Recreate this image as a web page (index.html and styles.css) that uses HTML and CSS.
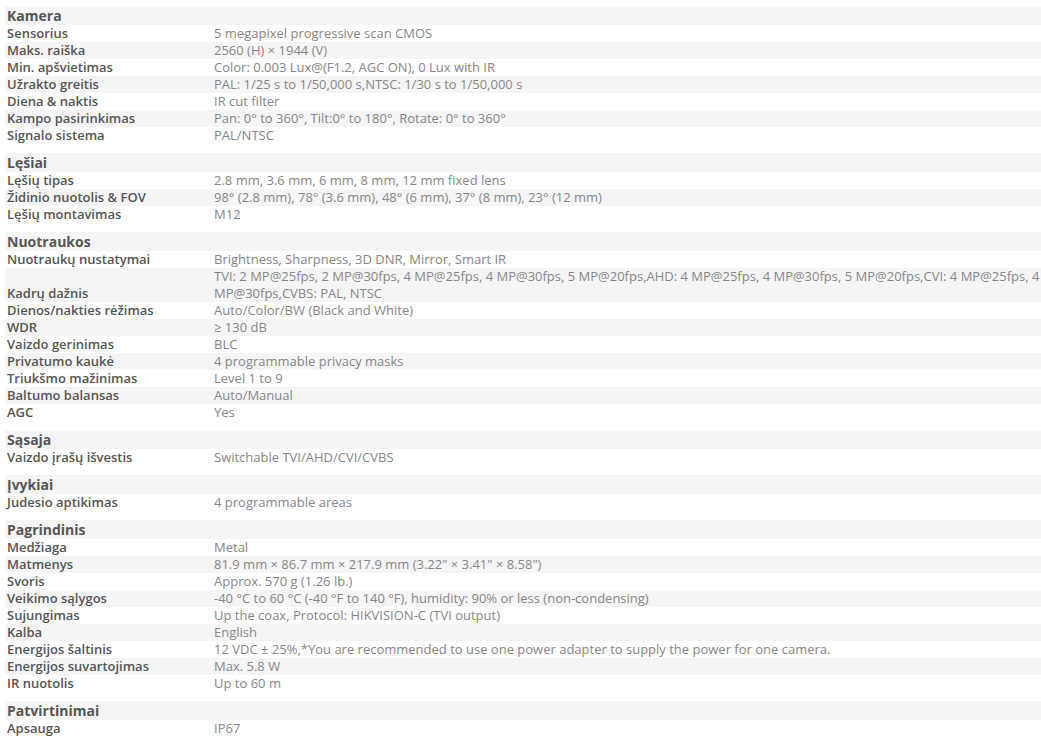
FILE: index.html
```html
<!DOCTYPE html>
<html lang="lt">
  <head>
    <meta charset="UTF-8" />
    <meta name="viewport" content="width=device-width, initial-scale=1.0" />
    <title>Specifikacijos</title>
    <link rel="stylesheet" href="styles.css">
  </head>
  <body>
    <div class="specs">
      <table class="spec-table">
        <tr class="spec-head"><th colspan="2">Kamera</th></tr>
        <tr><td class="spec-label">Sensorius</td><td class="spec-value">5 megapixel progressive scan CMOS</td></tr>
        <tr><td class="spec-label">Maks. raiška</td><td class="spec-value">2560 (H) × 1944 (V)</td></tr>
        <tr><td class="spec-label">Min. apšvietimas</td><td class="spec-value">Color: 0.003 Lux@(F1.2, AGC ON), 0 Lux with IR</td></tr>
        <tr><td class="spec-label">Užrakto greitis</td><td class="spec-value">PAL: 1/25 s to 1/50,000 s,NTSC: 1/30 s to 1/50,000 s</td></tr>
        <tr><td class="spec-label">Diena &amp; naktis</td><td class="spec-value">IR cut filter</td></tr>
        <tr><td class="spec-label">Kampo pasirinkimas</td><td class="spec-value">Pan: 0° to 360°, Tilt:0° to 180°, Rotate: 0° to 360°</td></tr>
        <tr><td class="spec-label">Signalo sistema</td><td class="spec-value">PAL/NTSC</td></tr>
      </table>

      <table class="spec-table">
        <tr class="spec-head"><th colspan="2">Lęšiai</th></tr>
        <tr><td class="spec-label">Lęšių tipas</td><td class="spec-value">2.8 mm, 3.6 mm, 6 mm, 8 mm, 12 mm fixed lens</td></tr>
        <tr><td class="spec-label">Židinio nuotolis &amp; FOV</td><td class="spec-value">98° (2.8 mm), 78° (3.6 mm), 48° (6 mm), 37° (8 mm), 23° (12 mm)</td></tr>
        <tr><td class="spec-label">Lęšių montavimas</td><td class="spec-value">M12</td></tr>
      </table>

      <table class="spec-table">
        <tr class="spec-head"><th colspan="2">Nuotraukos</th></tr>
        <tr><td class="spec-label">Nuotraukų nustatymai</td><td class="spec-value">Brightness, Sharpness, 3D DNR, Mirror, Smart IR</td></tr>
        <tr><td class="spec-label">Kadrų dažnis</td><td class="spec-value">TVI: 2 MP@25fps, 2 MP@30fps, 4 MP@25fps, 4 MP@30fps, 5 MP@20fps,AHD: 4 MP@25fps, 4 MP@30fps, 5 MP@20fps,CVI: 4 MP@25fps, 4 MP@30fps,CVBS: PAL, NTSC</td></tr>
        <tr><td class="spec-label">Dienos/nakties rėžimas</td><td class="spec-value">Auto/Color/BW (Black and White)</td></tr>
        <tr><td class="spec-label">WDR</td><td class="spec-value">≥ 130 dB</td></tr>
        <tr><td class="spec-label">Vaizdo gerinimas</td><td class="spec-value">BLC</td></tr>
        <tr><td class="spec-label">Privatumo kaukė</td><td class="spec-value">4 programmable privacy masks</td></tr>
        <tr><td class="spec-label">Triukšmo mažinimas</td><td class="spec-value">Level 1 to 9</td></tr>
        <tr><td class="spec-label">Baltumo balansas</td><td class="spec-value">Auto/Manual</td></tr>
        <tr><td class="spec-label">AGC</td><td class="spec-value">Yes</td></tr>
      </table>

      <table class="spec-table">
        <tr class="spec-head"><th colspan="2">Sąsaja</th></tr>
        <tr><td class="spec-label">Vaizdo įrašų išvestis</td><td class="spec-value">Switchable TVI/AHD/CVI/CVBS</td></tr>
      </table>

      <table class="spec-table">
        <tr class="spec-head"><th colspan="2">Įvykiai</th></tr>
        <tr><td class="spec-label">Judesio aptikimas</td><td class="spec-value">4 programmable areas</td></tr>
      </table>

      <table class="spec-table">
        <tr class="spec-head"><th colspan="2">Pagrindinis</th></tr>
        <tr><td class="spec-label">Medžiaga</td><td class="spec-value">Metal</td></tr>
        <tr><td class="spec-label">Matmenys</td><td class="spec-value">81.9 mm × 86.7 mm × 217.9 mm (3.22" × 3.41" × 8.58")</td></tr>
        <tr><td class="spec-label">Svoris</td><td class="spec-value">Approx. 570 g (1.26 lb.)</td></tr>
        <tr><td class="spec-label">Veikimo sąlygos</td><td class="spec-value">-40 °C to 60 °C (-40 °F to 140 °F), humidity: 90% or less (non-condensing)</td></tr>
        <tr><td class="spec-label">Sujungimas</td><td class="spec-value">Up the coax, Protocol: HIKVISION-C (TVI output)</td></tr>
        <tr><td class="spec-label">Kalba</td><td class="spec-value">English</td></tr>
        <tr><td class="spec-label">Energijos šaltinis</td><td class="spec-value">12 VDC ± 25%,*You are recommended to use one power adapter to supply the power for one camera.</td></tr>
        <tr><td class="spec-label">Energijos suvartojimas</td><td class="spec-value">Max. 5.8 W</td></tr>
        <tr><td class="spec-label">IR nuotolis</td><td class="spec-value">Up to 60 m</td></tr>
      </table>

      <table class="spec-table">
        <tr class="spec-head"><th colspan="2">Patvirtinimai</th></tr>
        <tr><td class="spec-label">Apsauga</td><td class="spec-value">IP67</td></tr>
      </table>
    </div>
  </body>
</html>
```

FILE: styles.css
```css
* {
  margin: 0;
  padding: 0;
  box-sizing: border-box;
}

:root {
  --stripe: #f5f5f5;
  --label: #565656;
  --value: #878787;
}

body {
  font-family: 'Open Sans', 'DejaVu Sans', sans-serif;
  background: #ffffff;
  color: var(--label);
  padding: 6px 0 0 5px;
}

.specs {
  width: 1036px;
}

.spec-table {
  width: 100%;
  border-collapse: collapse;
  margin-bottom: 9px;
}

.spec-table tr:nth-child(odd) {
  background: var(--stripe);
}

.spec-head th {
  text-align: left;
  font-size: 14px;
  font-weight: 700;
  line-height: 19px;
  height: 19px;
  padding: 0 2px;
  color: var(--label);
}

.spec-table td {
  line-height: 17px;
  vertical-align: bottom;
}

.spec-table .spec-label {
  width: 209px;
  padding: 0 2px;
  font-size: 13px;
  font-weight: 600;
  color: var(--label);
}

.spec-table .spec-value {
  padding: 0;
  font-size: 13px;
  font-weight: 400;
  color: var(--value);
}
```
